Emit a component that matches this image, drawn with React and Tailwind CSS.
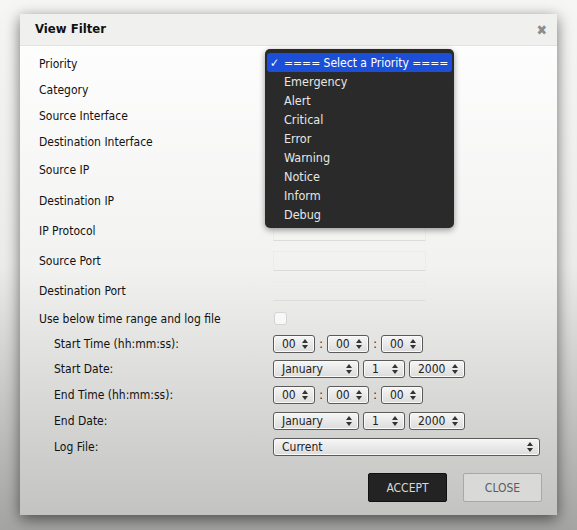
const font = { fontFamily: '"DejaVu Sans Condensed", "DejaVu Sans", Tahoma, sans-serif' };

function Arrows() {
  return (
    <svg width="6" height="10" viewBox="0 0 6 10" className="shrink-0">
      <path d="M3 0L6 4H0z M3 10L0 6h6z" fill="#333" />
    </svg>
  );
}

function FakeSelect({ value, w }) {
  return (
    <div
      className={`h-[18px] ${w} flex items-center justify-between pl-[8px] pr-[6px] rounded-[3px] border border-[#5a5a5a] bg-gradient-to-b from-[#f6f6f6] to-[#dcdcdc] text-[12px] text-[#222] shadow-[inset_0_0_0_1px_#fafafa]`}
    >
      <span>{value}</span>
      <Arrows />
    </div>
  );
}

function TimeRow() {
  return (
    <div className="flex items-center">
      <FakeSelect value="00" w="w-[42px]" />
      <span className="w-[12px] text-center text-[12px] text-[#222]">:</span>
      <FakeSelect value="00" w="w-[42px]" />
      <span className="w-[12px] text-center text-[12px] text-[#222]">:</span>
      <FakeSelect value="00" w="w-[42px]" />
    </div>
  );
}

function DateRow() {
  return (
    <div className="flex items-center gap-[4px]">
      <FakeSelect value="January" w="w-[86px]" />
      <FakeSelect value="1" w="w-[42px]" />
      <FakeSelect value="2000" w="w-[56px]" />
    </div>
  );
}

function TextBox() {
  return <div className="h-[20px] w-[153px] border border-[#ececec] border-b-[#dcdcdc] bg-transparent" />;
}

const rows = [
  { label: 'Priority', h: 'h-[26px]' },
  { label: 'Category', h: 'h-[26px]' },
  { label: 'Source Interface', h: 'h-[26px]' },
  { label: 'Destination Interface', h: 'h-[25px]' },
  { label: 'Source IP', h: 'h-[32px]', ctl: <TextBox /> },
  { label: 'Destination IP', h: 'h-[29px]', ctl: <TextBox /> },
  { label: 'IP Protocol', h: 'h-[31px]', ctl: <TextBox /> },
  { label: 'Source Port', h: 'h-[30px]', ctl: <TextBox /> },
  { label: 'Destination Port', h: 'h-[30px]', ctl: <TextBox /> },
  {
    label: 'Use below time range and log file',
    h: 'h-[25px]',
    ctl: <div className="ml-[1px] w-[13px] h-[13px] rounded-[3px] border border-[#d4d4d4] bg-[#f8f8f8]" />,
  },
  { label: 'Start Time (hh:mm:ss):', h: 'h-[25px]', sub: true, ctl: <TimeRow /> },
  { label: 'Start Date:', h: 'h-[26px]', sub: true, ctl: <DateRow /> },
  { label: 'End Time (hh:mm:ss):', h: 'h-[26px]', sub: true, ctl: <TimeRow /> },
  { label: 'End Date:', h: 'h-[26px]', sub: true, ctl: <DateRow /> },
  { label: 'Log File:', h: 'h-[25px]', sub: true, ctl: <FakeSelect value="Current" w="w-[267px]" /> },
];

const priorities = ['Emergency', 'Alert', 'Critical', 'Error', 'Warning', 'Notice', 'Inform', 'Debug'];

export default function App() {
  return (
    <div
      className="w-[577px] h-[530px] overflow-hidden bg-gradient-to-b from-[#f6f6f4] via-[#ececea] to-[#a4a4a2] pt-[14px] pl-[20px]"
      style={font}
    >
      <div className="relative w-[537px] h-[501px] flex flex-col bg-gradient-to-b from-[#ffffff] via-[#f2f2f1] to-[#c3c3c1] shadow-[0_4px_14px_rgba(0,0,0,0.55)]">
        {/* Header */}
        <div className="h-[32px] shrink-0 flex items-center justify-between pl-[15px] pr-[10px] bg-[#f0f0ee] border-b border-[#e2e2e0]">
          <h2 className="text-[13px] font-bold text-[#111] -mt-[2px]">View Filter</h2>
          <span className="text-[14px] leading-none text-[#8c8c8c] font-bold">✖</span>
        </div>

        {/* Rows */}
        <div className="pt-[5px] flex flex-col">
          {rows.map((r) => (
            <div key={r.label} className={`${r.h} flex items-center`}>
              <div className={`${r.sub ? 'pl-[34px]' : 'pl-[19px]'} w-[253px] text-[12px] text-[#111]`}>
                {r.label}
              </div>
              <div className="flex items-center">{r.ctl}</div>
            </div>
          ))}
        </div>

        {/* Footer */}
        <div className="flex justify-end gap-[16px] pr-[15px] pt-[14px]">
          <button className="w-[79px] h-[29px] rounded-[2px] bg-[#232323] border border-[#111] text-[12px] text-[#d8d8d8] uppercase">
            Accept
          </button>
          <button className="w-[79px] h-[29px] rounded-[2px] bg-[#d9d9d7] border border-[#a8a8a8] text-[12px] text-[#5c5c5c] uppercase">
            Close
          </button>
        </div>

        {/* Open priority dropdown */}
        <div className="absolute left-[245px] top-[35px] w-[189px] h-[179px] rounded-[5px] bg-[#2a2a2a] shadow-[0_2px_6px_rgba(0,0,0,0.4)] pt-[4px] px-[2px]">
          <div className="h-[19px] flex items-center whitespace-nowrap rounded-[3px] bg-[#1b4fd8] pl-[3px] text-[12px] text-white">
            <span className="w-[14px]">✓</span>
            <span>==== Select a Priority ====</span>
          </div>
          <div className="pt-[1px]">
            {priorities.map((p) => (
              <div key={p} className="h-[19px] flex items-center pl-[17px] text-[12.5px] text-[#e6e6e6]">
                {p}
              </div>
            ))}
          </div>
        </div>
      </div>
    </div>
  );
}
